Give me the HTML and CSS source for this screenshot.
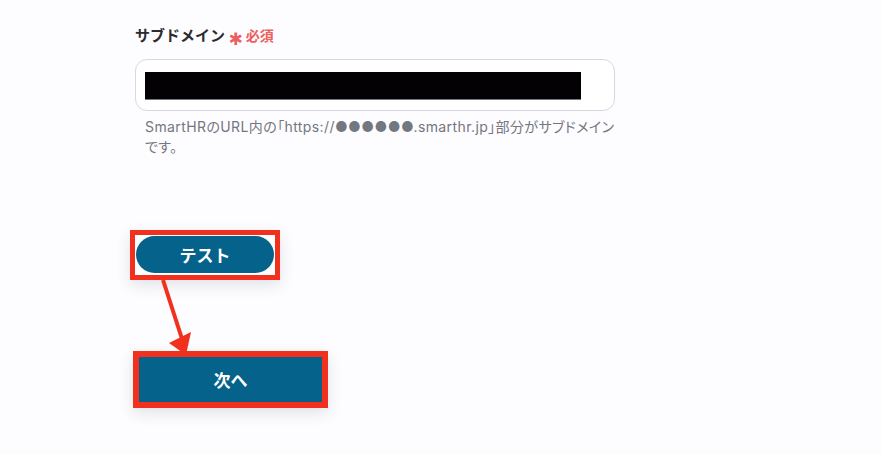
FILE: index.html
```html
<!DOCTYPE html>
<html lang="ja">

<head>
    <meta charset="UTF-8">
    <meta name="viewport" content="width=device-width, initial-scale=1.0">
    <title>サブドメイン設定</title>
    <link rel="stylesheet" href="styles.css">
</head>

<body>
    <div class="panel">
        <div class="field">
            <label class="label" for="subdomain">サブドメイン <span class="required"><span class="star">✱</span>必須</span></label>
            <div class="inputBox" id="subdomain">
                <div class="masked"></div>
            </div>
            <p class="help">SmartHRのURL内の「https://●●●●●●.smarthr.jp」部分がサブドメインです。</p>
        </div>

        <div class="steps">
            <div class="frame frameTest">
                <button class="btn btnTest">テスト</button>
            </div>
            <div class="frame frameNext">
                <button class="btn btnNext">次へ</button>
            </div>

            <svg class="arrow" width="60" height="90" viewBox="0 0 60 90">
                <line x1="7" y1="0" x2="27" y2="62" stroke="#f2301e" stroke-width="4" />
                <polygon points="13,63 35,52 30,75" fill="#f2301e" />
            </svg>
        </div>
    </div>
</body>

</html>
```

FILE: styles.css
```css
/* Reset CSS */
* {
    margin: 0;
    padding: 0;
    box-sizing: border-box;
}

body {
    font-family: 'Noto Sans CJK JP', 'Noto Sans', sans-serif;
    background: #fdfcfe;
    width: 882px;
    height: 454px;
    overflow: hidden;
}

.panel {
    padding: 24px 0 0 135px;
}

.field {
    width: 480px;
}

.label {
    display: block;
    font-size: 15px;
    font-weight: bold;
    color: #2b2b2e;
    line-height: 22px;
}

.required {
    color: #ec5f63;
    font-size: 14px;
}

.star {
    font-family: 'DejaVu Sans', sans-serif;
    font-size: 17px;
    vertical-align: -4px;
    margin-right: 3px;
}

.inputBox {
    margin-top: 9px;
    height: 52px;
    border: 1px solid #d6d9e2;
    border-radius: 12px;
    background: #fff;
    padding: 12px 33px 11px 9px;
}

.masked {
    height: 28px;
    background: #030104;
    border-bottom: 1px solid #777;
}

.help {
    margin-top: 6px;
    padding-left: 10px;
    font-family: 'Inter', 'Noto Sans CJK JP', sans-serif;
    font-feature-settings: "palt";
    font-size: 14px;
    letter-spacing: 0.4px;
    line-height: 20px;
    color: #737780;
    width: 480px;
}

.steps {
    position: relative;
    margin-top: 73px;
}

.frame {
    display: block;
    box-shadow: 0 5px 14px rgba(40, 40, 80, 0.12);
}

.frameTest {
    width: 150px;
    height: 50px;
    margin-left: -5px;
    border: 5px solid #f2301e;
    padding: 1px 1px 2px 1px;
    background: #fff;
}

.frameNext {
    width: 195px;
    height: 57px;
    margin-top: 71px;
    margin-left: -2px;
    border: 6px solid #f2301e;
}

.btn {
    border: none;
    color: #fff;
    font-family: 'Noto Sans CJK JP', sans-serif;
    font-weight: bold;
    font-size: 17px;
    background: #05628a;
    width: 100%;
    height: 100%;
    cursor: pointer;
}

.btnTest {
    border-radius: 19px;
}

.arrow {
    position: absolute;
    left: 21px;
    top: 50px;
}
```
